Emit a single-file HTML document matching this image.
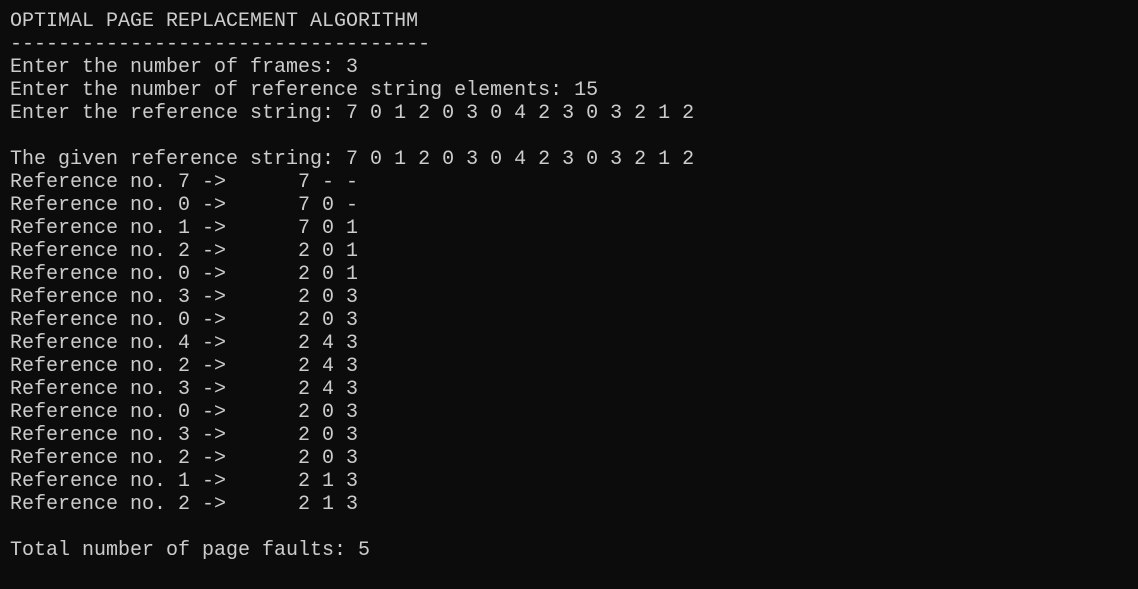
<!DOCTYPE html>
<html><head><meta charset="utf-8"><style>
html,body{margin:0;padding:0;background:#0c0c0c;width:1138px;height:589px;overflow:hidden}
pre{margin:0;padding:10px 0 0 10px;font-family:"Liberation Mono",monospace;font-size:20px;line-height:23px;color:#cccccc}
</style></head><body><pre>OPTIMAL PAGE REPLACEMENT ALGORITHM
-----------------------------------
Enter the number of frames: 3
Enter the number of reference string elements: 15
Enter the reference string: 7 0 1 2 0 3 0 4 2 3 0 3 2 1 2

The given reference string: 7 0 1 2 0 3 0 4 2 3 0 3 2 1 2
Reference no. 7 ->      7 - -
Reference no. 0 ->      7 0 -
Reference no. 1 ->      7 0 1
Reference no. 2 ->      2 0 1
Reference no. 0 ->      2 0 1
Reference no. 3 ->      2 0 3
Reference no. 0 ->      2 0 3
Reference no. 4 ->      2 4 3
Reference no. 2 ->      2 4 3
Reference no. 3 ->      2 4 3
Reference no. 0 ->      2 0 3
Reference no. 3 ->      2 0 3
Reference no. 2 ->      2 0 3
Reference no. 1 ->      2 1 3
Reference no. 2 ->      2 1 3

Total number of page faults: 5</pre></body></html>
